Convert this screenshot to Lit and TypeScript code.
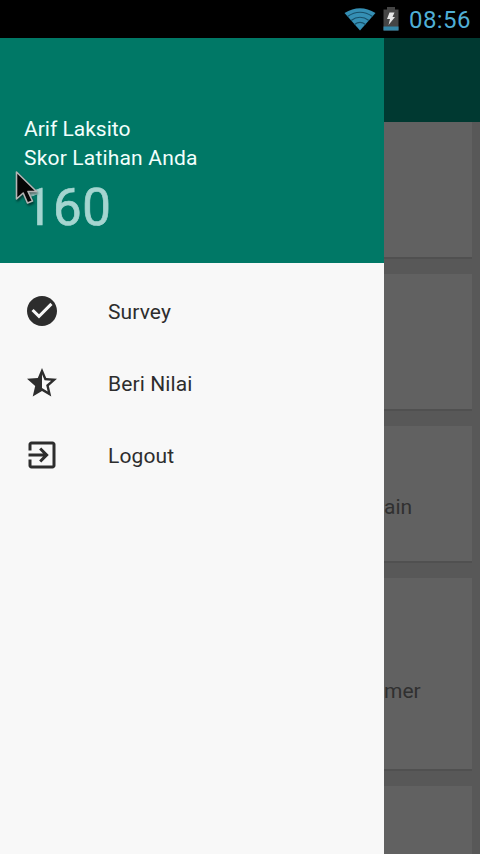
import { LitElement, html, css, svg } from "lit";
import { customElement } from "lit/decorators.js";

const menu = [
  { label: "Survey", icon: svg`<path d="M12 2C6.480 2 2 6.480 2 12s4.480 10 10 10 10-4.480 10-10S17.520 2 12 2zm-2 15l-5-5 1.410-1.410L10 14.170l7.590-7.590L19 8l-9 9z"/>` },
  { label: "Beri Nilai", icon: svg`<path d="M22 9.240l-7.190-.62L12 2 9.190 8.630 2 9.240l5.460 4.730L5.820 21 12 17.270 18.180 21l-1.630-7.030L22 9.240zM12 15.400V6.100l1.710 4.040 4.380.38-3.320 2.880 1 4.280L12 15.400z"/>` },
  { label: "Logout", icon: svg`<path d="M10.090 15.590L11.500 17l5-5-5-5-1.410 1.410L12.670 11H3v2h9.670l-2.580 2.590zM19 3H5c-1.110 0-2 .9-2 2v4h2V5h14v14H5v-4H3v4c0 1.100.89 2 2 2h14c1.100 0 2-.9 2-2V5c0-1.100-.9-2-2-2z"/>` },
];

@customElement("app-root")
export class AppRoot extends LitElement {
  static styles = css`
    :host {
      display: flex;
      flex-direction: column;
      position: relative;
      width: 480px;
      height: 854px;
      overflow: hidden;
      font-family: Roboto, "Liberation Sans", sans-serif;
      font-size: 21px;
    }
    .status {
      flex: none;
      box-sizing: border-box;
      height: 38px;
      background: #000;
      display: flex;
      align-items: center;
      justify-content: flex-end;
      padding-right: 10px;
      color: #4fafd6;
    }
    .wifi { width: 32px; height: 24px; margin-right: 7px; }
    .battery { width: 16px; height: 24px; margin-right: 10px; }
    .clock { font-size: 24px; line-height: 38px; width: 61px; white-space: nowrap; padding-top: 1px; letter-spacing: 0.4px; }
    .screen { flex: 1; min-height: 0; display: flex; }
    .drawer { width: 384px; flex: none; background: #f8f8f8; }
    .profile {
      box-sizing: border-box;
      height: 225px;
      padding: 77px 24px 0;
      background: #007866;
      color: #f2fffc;
    }
    .line { line-height: 29px; white-space: nowrap; }
    .caption { letter-spacing: 0.18px; }
    .score { font-size: 51px; line-height: 60px; margin-top: 5px; color: #a5d5d0; letter-spacing: 0.4px; -webkit-text-stroke: 0.7px #a5d5d0; }
    .menu { padding-top: 12px; }
    .item { display: flex; align-items: center; gap: 48px; height: 72px; padding-left: 24px; color: #2d2d2d; }
    .item svg { width: 36px; height: 36px; fill: #2d2d2d; }
    .label { padding-top: 1px; letter-spacing: 0.1px; }
    .content { flex: 1; min-width: 0; background: #585858; overflow: hidden; }
    .toolbar { height: 84px; background: #003931; }
    .cards { display: flex; flex-direction: column; gap: 15px; padding-right: 8px; }
    .card {
      flex: none;
      box-sizing: border-box;
      height: 137px;
      background: #616161;
      border-bottom: 2px solid #505050;
      color: #303030;
      line-height: 26px;
    }
    .tall { height: 193px; }
    .ain { padding-top: 68px; }
    .mer { padding-top: 100px; }
    .cursor { position: absolute; left: 12px; top: 167px; width: 30px; height: 42px; filter: drop-shadow(1px 2px 1px rgba(0, 0, 0, 0.5)); }
  `;

  render() {
    return html`
      <header class="status">
        <svg class="wifi" viewBox="0 0 32 24">
          <path d="M.5 6Q16-3.500 31.500 6L16 23.500Z" fill="#358fb4" />
          <g fill="none" stroke="#17506a" stroke-width="1.200">
            <path d="M3.500 9.500Q16 1 28.500 9.500M7 13.500Q16 7 25 13.500M10.500 17.500Q16 13.300 21.500 17.500" />
          </g>
        </svg>
        <svg class="battery" viewBox="0 0 16 24">
          <path d="M4 0h8v2.500h3.500v21H.5v-21H4z" fill="#454545" />
          <path d="M.5 19.500h15v4H.5z" fill="#3587a8" />
          <path d="M6.500 5.500h5L9.500 10H12l-6.500 8 1.500-6H4z" fill="#e6e6e6" />
        </svg>
        <span class="clock">08:56</span>
      </header>
      <div class="screen">
        <nav class="drawer">
          <div class="profile">
            <div class="line">Arif Laksito</div>
            <div class="line caption">Skor Latihan Anda</div>
            <div class="score">160</div>
          </div>
          <div class="menu">
            ${menu.map((m) => html`<div class="item"><svg viewBox="0 0 24 24">${m.icon}</svg><span class="label">${m.label}</span></div>`)}
          </div>
        </nav>
        <main class="content">
          <div class="toolbar"></div>
          <div class="cards">
            <div class="card"></div>
            <div class="card"></div>
            <div class="card ain">ain</div>
            <div class="card tall mer">mer</div>
            <div class="card"></div>
          </div>
        </main>
      </div>
      <svg class="cursor" viewBox="0 0 30 42">
        <path d="M4.500 5V32L11.200 26L15.500 36L20.500 34L16 24.500H24.500Z" fill="#050505" stroke="#b5b5b5" stroke-width="1.600" stroke-linejoin="round" />
      </svg>
    `;
  }
}
